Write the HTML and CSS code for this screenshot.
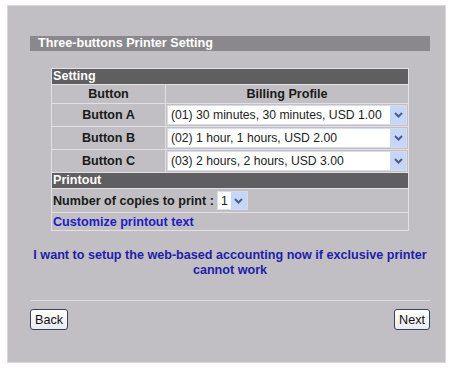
FILE: index.html
```html
<!DOCTYPE html>
<html>
<head>
<meta charset="utf-8">
<link rel="stylesheet" href="styles.css">
</head>
<body>
<div class="panel">
  <div class="title">Three-buttons Printer Setting</div>
  <table class="grid">
    <tr><td colspan="2" class="sect">Setting</td></tr>
    <tr class="head"><td class="c1">Button</td><td class="c2">Billing Profile</td></tr>
    <tr class="row"><td class="c1">Button A</td><td class="c2"><div class="sel"><span class="val">(01) 30 minutes, 30 minutes, USD 1.00</span><span class="arr"><svg width="9" height="6" viewBox="0 0 9 6"><path d="M1 1 L4.5 4.5 L8 1" fill="none" stroke="#4a5f8c" stroke-width="2"/></svg></span></div></td></tr>
    <tr class="row"><td class="c1">Button B</td><td class="c2"><div class="sel"><span class="val">(02) 1 hour, 1 hours, USD 2.00</span><span class="arr"><svg width="9" height="6" viewBox="0 0 9 6"><path d="M1 1 L4.5 4.5 L8 1" fill="none" stroke="#4a5f8c" stroke-width="2"/></svg></span></div></td></tr>
    <tr class="row"><td class="c1">Button C</td><td class="c2"><div class="sel"><span class="val">(03) 2 hours, 2 hours, USD 3.00</span><span class="arr"><svg width="9" height="6" viewBox="0 0 9 6"><path d="M1 1 L4.5 4.5 L8 1" fill="none" stroke="#4a5f8c" stroke-width="2"/></svg></span></div></td></tr>
    <tr><td colspan="2" class="sect">Printout</td></tr>
    <tr class="copies"><td colspan="2"><span class="lbl">Number of copies to print :</span><div class="sel small"><span class="val">1</span><span class="arr"><svg width="9" height="6" viewBox="0 0 9 6"><path d="M1 1 L4.5 4.5 L8 1" fill="none" stroke="#4a5f8c" stroke-width="2"/></svg></span></div></td></tr>
    <tr class="cust"><td colspan="2"><a class="link">Customize printout text</a></td></tr>
  </table>
  <p class="note">I want to setup the web-based accounting now if exclusive printer cannot work</p>
  <div class="rule"></div>
  <div class="actions">
    <button class="btn">Back</button>
    <button class="btn">Next</button>
  </div>
</div>
</body>
</html>
```
FILE: styles.css
```css
body {
  margin: 0;
  background: #ffffff;
  font-family: "Liberation Sans", Arial, sans-serif;
  font-size: 12.6px;
}
.panel {
  margin: 5px 0 0 7px;
  width: 439px;
  height: 358px;
  background: #c1bfc3;
  border: 1px solid #d9d7db;
  padding: 30px 0 0 22px;
  box-sizing: border-box;
}
.title {
  width: 400px;
  height: 15px;
  background: #8a888c;
  color: #ffffff;
  font-weight: bold;
  font-size: 12.6px;
  line-height: 15px;
  padding-left: 8px;
  box-sizing: border-box;
}
.grid {
  margin: 17px 0 0 21px;
  width: 358px;
  border-collapse: collapse;
  border: 1px solid #e2e0e4;
  font-size: 12.6px;
}
.grid td {
  border: 1px solid #e2e0e4;
  padding: 0;
  font-weight: bold;
  color: #1a1a1a;
}
.sect {
  background: #5f5e60;
  color: #ffffff !important;
  height: 15px;
  line-height: 15px;
  padding-left: 1px !important;
}
.c1 {
  width: 113px;
  text-align: center;
}
.c2 {
  text-align: center;
}
.head td {
  height: 18px;
}
.row td {
  height: 22px;
}
.row .c2 {
  padding: 0 1px 0 1px;
}
.sel {
  display: flex;
  align-items: stretch;
  height: 20px;
  background: #ffffff;
  border: 1px solid #d6dcea;
  box-sizing: border-box;
  font-weight: normal;
  text-align: left;
}
.val {
  flex: 1;
  padding-left: 3px;
  line-height: 18px;
  color: #222;
  white-space: nowrap;
  font-size: 12.2px;
}
.arr {
  width: 16px;
  background: #c7d6f7;
  display: flex;
  align-items: center;
  justify-content: center;
}
.copies td {
  height: 23px;
  padding-left: 1px;
}
.lbl {
  vertical-align: middle;
}
.sel.small {
  display: inline-flex;
  width: 31px;
  height: 19px;
  vertical-align: middle;
  margin-left: 3px;
}
.cust td {
  height: 17px;
  padding-left: 1px;
}
.link {
  color: #1c1cc4;
  font-weight: bold;
}
.note {
  margin: 17px 0 0 0;
  width: 400px;
  text-align: center;
  color: #1e1eaa;
  font-weight: bold;
  font-size: 12.6px;
  line-height: 15px;
}
.rule {
  width: 400px;
  height: 1px;
  background: #dddbdf;
  margin-top: 22px;
}
.actions {
  width: 400px;
  display: flex;
  justify-content: space-between;
  margin-top: 8px;
}
.btn {
  font-family: "Liberation Sans", Arial, sans-serif;
  font-size: 12.6px;
  height: 21px;
  padding: 0 4px;
  border: 1px solid #36445a;
  border-radius: 3px;
  background: linear-gradient(#ffffff, #ebeaf0);
  color: #111;
}
```
